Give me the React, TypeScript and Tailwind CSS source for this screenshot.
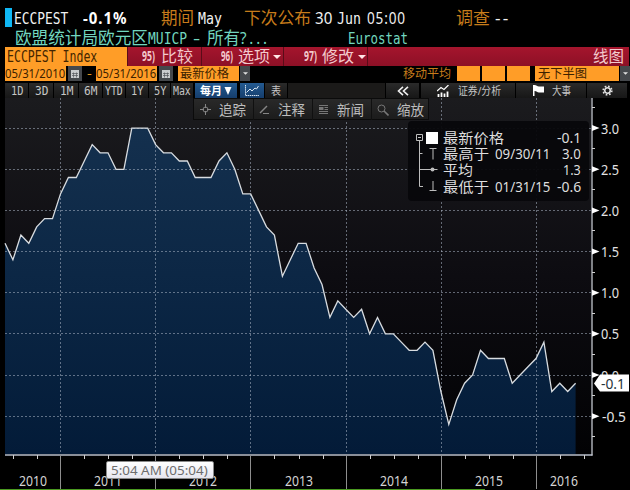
import { useLayoutEffect, useRef, useState, type ReactNode } from 'react'
import clsx from 'clsx'

const VALUES = [
  1.6, 1.4, 1.7, 1.6, 1.8, 1.9, 1.9, 2.2,
  2.4, 2.4, 2.6, 2.8, 2.7, 2.7, 2.5, 2.5, 3.0, 3.0, 3.0, 2.8,
  2.7, 2.7, 2.6, 2.6, 2.4, 2.4, 2.4, 2.6, 2.7, 2.5, 2.2, 2.2,
  2.0, 1.8, 1.7, 1.2, 1.4, 1.6, 1.6, 1.3, 1.1, 0.7, 0.9, 0.8,
  0.7, 0.8, 0.5, 0.7, 0.5, 0.5, 0.4, 0.3, 0.3, 0.4, 0.3, -0.2,
  -0.6, -0.3, -0.1, 0.0, 0.3, 0.2, 0.2, 0.2, -0.1, 0.0, 0.1, 0.2,
  0.4, -0.2, -0.1, -0.2, -0.1,
]

const YEARS = [
  { label: '2010', x: 33 },
  { label: '2011', x: 108 },
  { label: '2012', x: 203 },
  { label: '2013', x: 299 },
  { label: '2014', x: 394 },
  { label: '2015', x: 489 },
  { label: '2016', x: 564 },
]

const YEAR_LINES = [60.5, 155.5, 250.5, 346.5, 441.5, 536.5]
const QUARTER_TICKS = [13, 37, 84, 108, 132, 179, 203, 227, 274, 299, 323, 370, 394, 418, 465, 489, 513, 560, 584]
const LEVELS = [3, 2.5, 2, 1.5, 1, 0.5, 0, -0.5]

const MONO = "font-['DejaVu_Sans_Mono',monospace]"

// plot coordinates, relative to the top of the chart
const px = (i: number) => 5 + i * 7.925
const py = (v: number) => 277 - v * 82.3

// Squeezes or stretches a line of text to the width of its box
function Fit({ className, children }: { className: string; children: ReactNode }) {
  const box = useRef<HTMLSpanElement>(null)
  const inner = useRef<HTMLSpanElement>(null)
  const [scale, setScale] = useState(1)

  useLayoutEffect(() => {
    if (box.current && inner.current) {
      setScale(box.current.clientWidth / inner.current.offsetWidth)
    }
  }, [])

  return (
    <span ref={box} className={clsx('block shrink-0 whitespace-nowrap', className)}>
      <span ref={inner} className="inline-block origin-left" style={{ transform: `scaleX(${scale})` }}>
        {children}
      </span>
    </span>
  )
}

function Caret({ className }: { className: string }) {
  return (
    <svg viewBox="0 0 8 4" className={clsx('shrink-0 fill-current', className)}>
      <path d="M0 0h8L4 4z" />
    </svg>
  )
}

function CalendarButton({ className }: { className?: string }) {
  return (
    <div className={clsx('flex h-[15px] w-[14px] shrink-0 items-center justify-center bg-[#45484c]', className)}>
      <svg viewBox="0 0 8 8" className="h-2 w-2">
        <path d="M0 0h8v8H0z" fill="#c9cbcd" />
        <path d="M1 3.5h6M1 5.5h6M2.5 2.5v5M5.5 2.5v5" stroke="#55585c" strokeWidth=".7" />
      </svg>
    </div>
  )
}

function TopLines() {
  return (
    <>
      <div className="flex h-[28px] pl-[5px] pt-[7px] text-[16px] leading-[22px]">
        <div className="mt-px h-[19px] w-[7px] bg-[#10b8f5]" />
        <Fit className={clsx('ml-[2px] mt-px w-[54px] text-[#f1f1f1]', MONO)}>ECCPEST</Fit>
        <Fit className="ml-[15px] w-[44px] font-bold tracking-[1px] text-white">-0.1%</Fit>
        <Fit className="ml-[34px] w-[33px] text-[17px] text-[#c77c1b]">期间</Fit>
        <Fit className={clsx('ml-[4px] mt-px w-[24px] text-[#f1f1f1]', MONO)}>May</Fit>
        <Fit className="ml-[22px] w-[67px] text-[17px] text-[#c77c1b]">下次公布</Fit>
        <Fit className="ml-[4px] w-[17px] text-[#f1f1f1]">30</Fit>
        <Fit className={clsx('ml-[5px] mt-px w-[24px] text-[#f1f1f1]', MONO)}>Jun</Fit>
        <Fit className="ml-[6px] w-[39px] tracking-[1px] text-[#f1f1f1]">05:00</Fit>
        <Fit className="ml-[50px] w-[34px] text-[17px] text-[#c77c1b]">调查</Fit>
        <Fit className="ml-[5px] w-[15px] tracking-[2px] text-[#f1f1f1]">--</Fit>
      </div>
      <div className="flex h-[19px] pl-[15px] text-[16px] leading-[20px] text-[#72d6bf]">
        <Fit className="w-[133px] text-[17px]">欧盟统计局欧元区</Fit>
        <Fit className={clsx('mt-px w-[39px]', MONO)}>MUICP</Fit>
        <Fit className="ml-[6px] w-[7px]">-</Fit>
        <Fit className="ml-[7px] w-[33px] text-[17px]">所有</Fit>
        <Fit className="w-[30px] tracking-[3px]">?...</Fit>
        <Fit className={clsx('ml-[78px] mt-px w-[60px]', MONO)}>Eurostat</Fit>
      </div>
    </>
  )
}

function CommandBar() {
  return (
    <div className="mx-[5px] mr-px flex h-[19px] bg-linear-to-b from-[#a5152d] to-[#8d1026] text-[16px] leading-[18px] text-[#f3c9cd]">
      <div className={clsx('flex w-[122px] bg-[#ff9d27] pl-[2px] pt-px text-[15px] text-[#442500]', MONO)}>
        <Fit className="w-[90px]">ECCPEST Index</Fit>
      </div>
      <div className="flex w-[75px] border-x border-[#5a0c18] pl-[14px]">
        <Fit className="w-[13px] text-[14px] font-bold">95)</Fit>
        <Fit className="ml-[6px] w-[32px]">比较</Fit>
      </div>
      <div className="flex w-[82px] border-r border-[#5a0c18] pl-[19px]">
        <Fit className="w-[12px] text-[14px] font-bold">96)</Fit>
        <Fit className="ml-[5px] w-[32px]">选项</Fit>
        <Caret className="ml-[3px] mt-[8px] h-1 w-2 text-[#ffe6e6]" />
      </div>
      <div className="flex w-[84px] border-r border-[#5a0c18] pl-[20px]">
        <Fit className="w-[13px] text-[14px] font-bold">97)</Fit>
        <Fit className="ml-[5px] w-[32px]">修改</Fit>
        <Caret className="ml-[4px] mt-[8px] h-1 w-2 text-[#ffe6e6]" />
      </div>
      <Fit className="ml-auto mr-[5px] w-[31px]">线图</Fit>
    </div>
  )
}

function FieldBar() {
  return (
    <div className="flex h-[17px] pl-[5px] text-[12px] leading-[15px] text-[#3c2100]">
      <div className="h-[15px] w-[61px] bg-[#ff9d27]">
        <Fit className="w-[60px] text-[13px]">05/31/2010</Fit>
      </div>
      <CalendarButton className="ml-[2px]" />
      <Fit className="ml-[5px] w-[5px] text-[#e0951f]">-</Fit>
      <div className="ml-[4px] h-[15px] w-[61px] bg-[#ff9d27]">
        <Fit className="w-[60px] text-[13px]">05/31/2016</Fit>
      </div>
      <CalendarButton className="ml-[2px]" />
      <div className="ml-[5px] h-[15px] w-[61px] bg-[#ff9d27] pl-[2px]">
        <Fit className="w-[49px]">最新价格</Fit>
      </div>
      <div className="ml-px flex h-[15px] w-[10px] items-center justify-center bg-[#45484c]">
        <Caret className="h-[3px] w-[5px] text-[#e1e1e1]" />
      </div>
      <Fit className="ml-[153px] w-[48px] text-[#c77c1b]">移动平均</Fit>
      <div className="ml-[6px] flex gap-[2px]">
        {[0, 1, 2].map(i => <div key={i} className="h-[15px] w-[23px] bg-[#ff9d27]" />)}
      </div>
      <div className="ml-[5px] h-[15px] w-[84px] bg-[#ff9d27] pl-[3px]">
        <Fit className="w-[49px]">无下半图</Fit>
      </div>
      <div className="ml-px flex h-[15px] w-[10px] items-center justify-center bg-[#45484c]">
        <Caret className="h-[3px] w-[5px] text-[#e1e1e1]" />
      </div>
    </div>
  )
}

const RANGES = [
  { label: '1D', box: 'w-[24px]', text: 'w-[12px]' },
  { label: '3D', box: 'w-[25px]', text: 'w-[13px]' },
  { label: '1M', box: 'w-[25px]', text: 'w-[13px]' },
  { label: '6M', box: 'w-[24px]', text: 'w-[13px]' },
  { label: 'YTD', box: 'w-[23px]', text: 'w-[18px]' },
  { label: '1Y', box: 'w-[23px]', text: 'w-[12px]' },
  { label: '5Y', box: 'w-[22px]', text: 'w-[12px]' },
  { label: 'Max', box: 'w-[23px]', text: 'w-[18px]' },
]

const KEY = 'flex h-[15px] items-center bg-linear-to-b from-[#2a2a2a] to-[#171717] border-r border-black'

function RangeBar() {
  return (
    <div className="flex h-[15px] pl-[5px] text-[11px] leading-[14px] text-[#c6c6c6]">
      {RANGES.map(r => (
        <div key={r.label} className={clsx(KEY, MONO, 'justify-center text-[12px]', r.box)}>
          <Fit className={r.text}>{r.label}</Fit>
        </div>
      ))}
      <div className="ml-px flex h-[15px] w-[42px] items-center bg-linear-to-b from-[#245b92] to-[#153d6c] pl-[5px] text-white">
        <Fit className="w-[22px] font-bold">每月</Fit>
        <svg viewBox="0 0 8 8" className="ml-[2px] h-2 w-2">
          <path d="M.5 0h7L4 8z" fill="#fff" />
        </svg>
      </div>
      <div className="ml-[3px] flex h-[15px] w-[24px] items-center bg-linear-to-b from-[#245b92] to-[#153d6c] pl-[4px]">
        <svg viewBox="0 0 16 12" className="h-3 w-4" fill="none" stroke="#d7e4f0">
          <path d="M1.5 0v10.5H15" strokeDasharray="1.5 .6" />
          <path d="M2.5 7.5L6 4l2 2 3-3 1.5 1L14.5 1" />
        </svg>
      </div>
      <div className={clsx(KEY, 'ml-px w-[23px] justify-center')}>
        <Fit className="w-[10px]">表</Fit>
      </div>
      <div className="h-[15px] w-[97px] bg-[#1b1a19]" />
      <div className={clsx(KEY, 'ml-px w-[34px] justify-center')}>
        <svg viewBox="0 0 12 10" className="h-[10px] w-3" fill="none" stroke="#eee" strokeWidth="1.6">
          <path d="M6 .8L1.5 5 6 9.2M11 .8L6.5 5 11 9.2" />
        </svg>
      </div>
      <div className={clsx(KEY, 'ml-px w-[95px] pl-[16px]')}>
        <svg viewBox="0 0 12 12" className="h-3 w-3" stroke="#fff" fill="none">
          <path d="M0 6l4-3.5 3 2L11.5 0" strokeWidth="1.2" />
          <path d="M1.5 12V9M4.5 12V7.5M7.5 12V8.5M10.5 12V6.5" strokeWidth="1.8" />
        </svg>
        <Fit className="ml-[9px] w-[43px]">证券/分析</Fit>
      </div>
      <div className={clsx(KEY, 'w-[71px] pl-[17px]')}>
        <svg viewBox="0 0 11 11" className="h-[11px] w-[11px] fill-white">
          <path d="M0 0h1.5c2 0 2.5 1.5 4.5 1.5H11v6H6C4 7.5 4 6 1.500 6v5H0z" />
        </svg>
        <Fit className="ml-[8px] w-[19px]">大事</Fit>
      </div>
      <div className={clsx(KEY, 'w-[41px] justify-center')}>
        <svg viewBox="0 0 12 12" className="h-[11px] w-[11px]" fill="none" stroke="#e2e2e2">
          <circle cx="6" cy="6" r="3" strokeWidth="1.7" />
          <circle cx="6" cy="6" r="4.7" strokeWidth="1.8" strokeDasharray="1.85 1.84" />
        </svg>
      </div>
    </div>
  )
}

function ChartTools() {
  const cell = 'flex h-[21px] items-center border-r border-[#101010]'
  return (
    <div className="absolute left-[193px] top-0 flex h-[22px] w-[236px] border border-[#0b0b0b] bg-linear-to-b from-[#292929] to-[#1c1c1c] text-[14px] leading-[20px] text-[#bdbdbd]">
      <div className={clsx(cell, 'w-[60px] pl-[6px]')}>
        <svg viewBox="0 0 11 11" className="h-[11px] w-[11px]" fill="none" stroke="#858585">
          <circle cx="5.5" cy="5.5" r="2.5" />
          <path d="M5.5 0v4M5.5 7v4M0 5.5h4M7 5.5h4" />
        </svg>
        <Fit className="ml-[8px] w-[27px]">追踪</Fit>
      </div>
      <div className={clsx(cell, 'w-[59px] pl-[5px]')}>
        <svg viewBox="0 0 11 10" className="h-[10px] w-[11px]" fill="none" stroke="#858585">
          <path d="M1 8l7-7" strokeWidth="1.5" />
          <path d="M4 8.5h6" />
        </svg>
        <Fit className="ml-[8px] w-[27px]">注释</Fit>
      </div>
      <div className={clsx(cell, 'w-[59px] pl-[6px]')}>
        <svg viewBox="0 0 10 10" className="h-[10px] w-[10px]" stroke="#777">
          <path d="M0 .5h9M5.5 2.5H9M5.5 4.5H9M0 6.5h9M0 8.5h9" />
          <path d="M0 2h4.5v3H0z" fill="#777" stroke="none" />
        </svg>
        <Fit className="ml-[8px] w-[27px]">新闻</Fit>
      </div>
      <div className="flex h-[21px] items-center pl-[5px]">
        <svg viewBox="0 0 12 12" className="h-3 w-3" fill="none" stroke="#777">
          <circle cx="4.5" cy="4.5" r="3.5" />
          <path d="M7 7l4.5 4.5" strokeWidth="1.6" />
        </svg>
        <Fit className="ml-[8px] w-[27px]">缩放</Fit>
      </div>
    </div>
  )
}

function Legend() {
  return (
    <div className="absolute left-[408px] top-[23px] flex h-[80px] w-[181px] rounded-[4px] bg-[#07070b]/95 pl-[8px] pt-[9px] text-[14px] leading-[16px] text-[#dedede]">
      <svg viewBox="0 0 24 66" className="h-[66px] w-6" fill="none" stroke="#bdbdbd">
        <path d="M.5 4.5h6v6h-6zM2 7.5h3M3.5 11v45.5M3.5 23.5h3M3.5 39.5h18M3.5 56.5h3.5" />
        <path d="M13.5 18.5h7M17 18.5v11M17 51v9M13.5 60.5h7" />
        <circle cx="16.5" cy="39.5" r="2" fill="#bdbdbd" stroke="none" />
        <path d="M10 2h12v12H10z" fill="#fff" stroke="none" />
      </svg>
      <div className="ml-[3px] flex w-[138px] flex-col">
        <div className="flex h-[16px] justify-between">
          <Fit className="w-[61px]">最新价格</Fit>
          <Fit className="w-[24px]">-0.1</Fit>
        </div>
        <div className="flex h-[16px]">
          <Fit className="w-[46px]">最高于</Fit>
          <Fit className="ml-[6px] w-[55px]">09/30/11</Fit>
          <Fit className="ml-auto w-[19px]">3.0</Fit>
        </div>
        <div className="flex h-[17px] justify-between">
          <Fit className="w-[30px]">平均</Fit>
          <Fit className="w-[18px]">1.3</Fit>
        </div>
        <div className="flex h-[16px]">
          <Fit className="w-[46px]">最低于</Fit>
          <Fit className="ml-[6px] w-[55px]">01/31/15</Fit>
          <Fit className="ml-auto w-[24px]">-0.6</Fit>
        </div>
      </div>
    </div>
  )
}

function PriceChart() {
  const points = VALUES.map((v, i) => `${px(i).toFixed(1)},${py(v).toFixed(1)}`).join(' ')
  const endX = px(VALUES.length - 1)

  return (
    <svg viewBox="0 0 630 392" className="block h-[392px] w-[630px]">
      <defs>
        <linearGradient id="plot" x1="0" y1="0" x2="0" y2="1">
          <stop offset="0" stopColor="#1b1b1e" />
          <stop offset=".5" stopColor="#0d0c11" />
          <stop offset="1" stopColor="#020204" />
        </linearGradient>
        <linearGradient id="area" gradientUnits="userSpaceOnUse" x1="0" y1="30" x2="0" y2="356">
          <stop offset="0" stopColor="#14304e" />
          <stop offset=".5" stopColor="#0b2644" />
          <stop offset="1" stopColor="#031b38" />
        </linearGradient>
      </defs>
      <rect x="5" y="0" width="586" height="356" fill="url(#plot)" />
      <polygon points={`5,356 ${points} ${endX},356`} fill="url(#area)" />

      <g stroke="#aab4c4" strokeOpacity=".55" strokeDasharray="2 2">
        {LEVELS.map(v => <path key={v} d={`M5 ${Math.floor(py(v)) + 0.5}H591`} />)}
        {YEAR_LINES.map(x => <path key={x} d={`M${x} 0V356`} />)}
      </g>
      <polyline points={points} fill="none" stroke="#d8dce0" strokeWidth="1.3" />

      {/* axes */}
      <path d="M5 357H592.5" stroke="#b9bfcc" strokeWidth="1.6" />
      <path d="M592 0V357.5" stroke="#c4c8d0" strokeWidth="1.3" />
      <g stroke="#8e8e8e">
        {YEAR_LINES.map(x => <path key={x} d={`M${x} 357V391`} />)}
      </g>
      <g stroke="#d0d0d0">
        {QUARTER_TICKS.map(x => <path key={x} d={`M${x + 0.5} 357v4`} />)}
        {[3.25, 2.75, 2.25, 1.75, 1.25, 0.75, 0.25, -0.25, -0.75].map(v => (
          <path key={v} d={`M592 ${Math.floor(py(v)) + 0.5}h3`} />
        ))}
      </g>
      {LEVELS.map(v => (
        <g key={v} fill="#e3e3e3">
          <path d={`M592 ${py(v) - 3}l7.5 3-7.5 3z`} fill="#fff" />
          <text
            x={v < 0 ? 602 : 601}
            y={py(v) + 5.5}
            fontSize="14"
            textLength={v < 0 ? 24 : 18}
            lengthAdjust="spacingAndGlyphs"
          >
            {v.toFixed(1)}
          </text>
        </g>
      ))}
      <path d="M594 285.5l6-9h29v17h-29z" fill="#fff" />
      <text x="601" y="291" fontSize="14" textLength="24" lengthAdjust="spacingAndGlyphs" fill="#25333a">-0.1</text>
      {YEARS.map(y => (
        <text
          key={y.label}
          x={y.x - 14}
          y="388"
          fontSize="14"
          textLength="28"
          lengthAdjust="spacingAndGlyphs"
          fill="#d4d4d4"
        >
          {y.label}
        </text>
      ))}
      <path d="M0 391.5H485" stroke="#4a9a20" />
    </svg>
  )
}

export default function App() {
  return (
    <div className="h-[490px] w-[630px] overflow-hidden bg-black font-['Noto_Sans','Noto_Sans_CJK_SC',sans-serif]">
      <TopLines />
      <CommandBar />
      <FieldBar />
      <RangeBar />
      <div className="relative h-[392px]">
        <PriceChart />
        <ChartTools />
        <Legend />
        <div className="absolute left-[106px] top-[363px] flex h-[18px] w-[108px] rounded-[2px] border border-[#8a8a8a] bg-linear-to-b from-white to-[#e6e6ef] pl-[4px] text-[13px] leading-[17px] text-[#6d6d6d]">
          <Fit className="w-[97px]">5:04 AM (05:04)</Fit>
        </div>
      </div>
    </div>
  )
}
